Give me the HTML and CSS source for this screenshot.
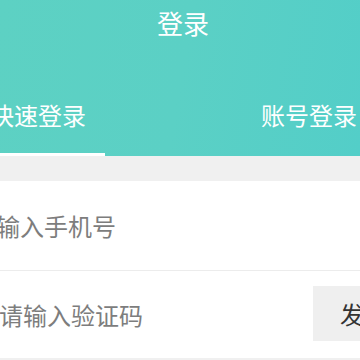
FILE: index.html
```html
<!DOCTYPE html>
<html lang="zh">
<head>
<meta charset="utf-8">
<title>登录</title>
<link rel="stylesheet" href="styles.css">
</head>
<body>
<div class="page">
  <header class="header">
    <div class="title">登录</div>
    <nav class="tabs">
      <div class="tab tab-active">快速登录</div>
      <div class="tab">账号登录</div>
    </nav>
    <div class="indicator"></div>
  </header>
  <section class="form">
    <div class="row row-phone">
      <div class="placeholder phone">请输入手机号</div>
    </div>
    <div class="divider"></div>
    <div class="row row-code">
      <div class="placeholder code">请输入验证码</div>
      <div class="send">发送验证码</div>
    </div>
  </section>
</div>
</body>
</html>
```

FILE: styles.css
```css
html, body {
  margin: 0;
  padding: 0;
  background: #f0f0f0;
}
body {
  width: 360px;
  height: 360px;
  overflow: hidden;
  font-family: "Noto Sans CJK SC", "Noto Sans", sans-serif;
}
.page {
  width: 360px;
  overflow: hidden;
}
.header {
  height: 156px;
  background: linear-gradient(100deg, #5dd1c3 0%, #5bd0c5 50%, #53cec8 100%);
  display: flex;
  flex-direction: column;
}
.title {
  height: 45px;
  line-height: 45px;
  font-size: 26px;
  color: #ffffff;
  text-align: center;
  padding-left: 6px;
}
.tabs {
  display: flex;
  justify-content: space-between;
  margin: 58px 3px 0 -10px;
  height: 24px;
}
.tab {
  font-size: 24px;
  line-height: 24px;
  color: #ffffff;
  white-space: nowrap;
}
.indicator {
  margin-top: 26px;
  width: 105px;
  height: 3px;
  background: #ffffff;
}
.form {
  margin-top: 25px;
  background: #ffffff;
}
.row {
  display: flex;
  align-items: center;
  white-space: nowrap;
}
.row-phone {
  height: 89px;
}
.row-code {
  height: 87px;
}
.divider {
  height: 1px;
  background: #ececec;
}
.placeholder {
  font-size: 24px;
  line-height: 24px;
  color: #7d7d7d;
}
.phone {
  margin-left: -28px;
}
.code {
  margin-left: -1px;
  flex: 1;
}
.send {
  flex-shrink: 0;
  width: 140px;
  height: 55px;
  margin-right: -93px;
  background: #efefef;
  color: #333333;
  font-size: 24px;
  line-height: 55px;
  padding-left: 27px;
  box-sizing: border-box;
  margin-top: -3px;
}
```
